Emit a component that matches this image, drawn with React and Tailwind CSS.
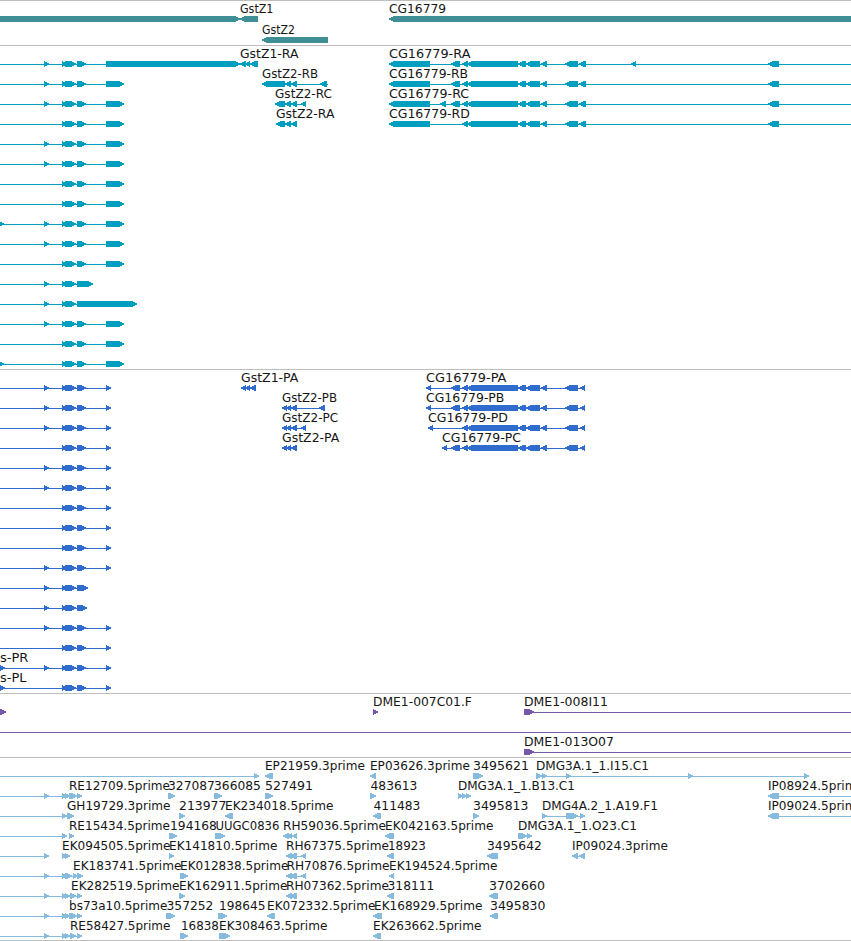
import React from "react";

// Features: ["R" | "L", start, end] is an exon arrow, ["-", start, end] an intron line.
// Labels: [text, ink start, ink end].
const R = (a, b) => ["R", a, b];
const L = (a, b) => ["L", a, b];
const I = (a, b) => ["-", a, b];

function Feature({ kind, a, b, y }) {
  if (kind === "-") return <rect x={a} y={y + 3} width={b - a} height={1} />;
  const h = Math.min(b - a + 1, 6);
  const pts =
    kind === "R"
      ? [[a, y], [b + 1 - h, y], [b + 1, y + 3], [b + 1 - h, y + 6], [a, y + 6]]
      : [[b, y], [a - 1 + h, y], [a - 1, y + 3], [a - 1 + h, y + 6], [b, y + 6]];
  return <polygon points={pts.map((p) => p.join(",")).join(" ")} />;
}

function Track({ className, height, top, rows }) {
  return (
    <section className="border-t border-[#bebebe]">
      <svg width="851" height={height} viewBox={`0 ${top} 851 ${height}`} className={`block ${className}`}>
        <g shapeRendering="crispEdges">
          {rows.map((r) => r.f.map(([kind, a, b], i) => <Feature key={`${r.y}-${i}`} kind={kind} a={a} b={b} y={r.y} />))}
        </g>
        <g className="fill-[#161616] font-['DejaVu_Sans',sans-serif] text-[12px]">
          {rows.map((r) =>
            (r.t || []).map(([text, a, b]) => (
              <text key={text} x={a - 0.5} y={r.y - 3} textLength={b - a + 0.9} lengthAdjust="spacingAndGlyphs">
                {text}
              </text>
            ))
          )}
        </g>
      </svg>
    </section>
  );
}

const genes = [
  {
    y: 16,
    f: [R(-10, 240), L(240, 258), L(389, 870)],
    t: [["GstZ1", 240.5, 273], ["CG16779", 389.5, 445.7]],
  },
  { y: 37, f: [L(262, 328)], t: [["GstZ2", 262.5, 294.5]] },
];

const cgExons = [L(462, 468), L(467, 518), L(518, 526), L(526, 540), L(541, 547), L(565, 578)];
const cgRna = [L(389, 430), I(430, 851), ...cgExons, L(579, 586), L(768, 779)];

const rnaRight = [
  {
    f: [I(240, 258), L(240, 246), L(245, 250), L(250, 258), ...cgRna, L(451, 460), L(631, 636)],
    t: [["GstZ1-RA", 240.5, 298], ["CG16779-RA", 389.5, 470]],
  },
  {
    f: [L(262, 285), L(285, 291), L(291, 297), I(297, 328), L(320, 327), ...cgRna, L(451, 460)],
    t: [["GstZ2-RB", 262.5, 317.7], ["CG16779-RB", 389.5, 467.7]],
  },
  {
    f: [L(275, 285), L(285, 291), L(291, 297), I(297, 306), L(301, 306), ...cgRna, L(440, 446), L(451, 460)],
    t: [["GstZ2-RC", 275.5, 331.5], ["CG16779-RC", 389.5, 468.7]],
  },
  {
    f: [L(276, 285), L(285, 291), L(291, 297), ...cgRna],
    t: [["GstZ2-RA", 276.5, 334], ["CG16779-RD", 389.5, 469.5]],
  },
];

const rna = Array.from({ length: 16 }, (_, i) => {
  const right = rnaRight[i] || { f: [], t: [] };
  const f = [R(62, 67), R(65, 76)];
  if (![3, 6, 7, 10, 14, 15].includes(i)) f.push(R(44, 49));
  if (i === 8 || i === 15) f.push(R(-2, 4));
  if (i === 11) f.push(I(0, 77), R(77, 93));
  else if (i === 12) f.push(I(0, 77), R(77, 137));
  else f.push(I(0, 106), R(77, 86), R(106, i === 0 ? 240 : 124));
  return { y: 61 + 20 * i, f: [...f, ...right.f], t: right.t };
});

const cgCds = [...cgExons, L(580, 585)];
const gst2 = [L(282, 287), L(286, 291), L(291, 297)];

const cdsRight = {
  0: {
    f: [L(241, 246), L(245, 250), L(250, 256), L(426, 431), I(426, 585), L(451, 460), ...cgCds],
    t: [["GstZ1-PA", 241.5, 298], ["CG16779-PA", 426.5, 506]],
  },
  1: {
    f: [...gst2, I(297, 325), L(319, 325), L(426, 431), I(426, 585), L(451, 460), ...cgCds],
    t: [["GstZ2-PB", 282.5, 336.7], ["CG16779-PB", 426.5, 504]],
  },
  2: {
    f: [...gst2, I(297, 306), L(301, 306), L(428, 433), I(428, 585), ...cgCds],
    t: [["GstZ2-PC", 282.5, 337.7], ["CG16779-PD", 428.5, 507.5]],
  },
  3: {
    f: [...gst2, L(442, 447), I(442, 585), L(451, 460), ...cgCds],
    t: [["GstZ2-PA", 282.5, 339], ["CG16779-PC", 442.5, 520.5]],
  },
  14: { f: [R(0, 5)], t: [["s-PR", 0.5, 28]] },
  15: { f: [R(0, 5)], t: [["s-PL", 0.5, 26]] },
};

const cds = Array.from({ length: 16 }, (_, i) => {
  const right = cdsRight[i] || { f: [], t: [] };
  const f = [R(62, 67), R(65, 76)];
  if (![3, 6, 7, 8, 13, 15].includes(i)) f.push(R(44, 49));
  if (i === 10) f.push(I(0, 77), R(77, 88));
  else if (i === 11) f.push(I(0, 77), R(77, 87));
  else f.push(I(0, 106), R(77, 86), R(106, 111));
  return { y: 385 + 20 * i, f: [...f, ...right.f], t: right.t };
});

const bacs = [
  {
    y: 709,
    f: [R(-6, 6), R(373, 378), R(524, 534), I(534, 851)],
    t: [["DME1-007C01.F", 373.5, 471.5], ["DME1-008I11", 524.5, 607.5]],
  },
  { y: 729, f: [I(0, 851)] },
  { y: 749, f: [R(524, 534), I(534, 851)], t: [["DME1-013O07", 524.5, 613.5]] },
];

const ests = [
  {
    y: 773,
    f: [I(0, 256), R(254, 259), L(265, 273), L(370, 376), R(473, 483), R(536, 542), R(542, 547), I(536, 806), R(566, 571), R(688, 693), R(804, 809)],
    t: [["EP21959.3prime", 265.5, 364.5], ["EP03626.3prime", 370.5, 469.5], ["3495621", 473.5, 528.5], ["DMG3A.1_1.I15.C1", 536.5, 648.5]],
  },
  {
    y: 793,
    f: [I(0, 80), R(44, 49), R(62, 67), R(65, 70), R(69, 77), R(77, 82), R(168, 175), R(214, 222), R(265, 273), R(370, 376), R(458, 463), R(462, 467), R(466, 471), L(768, 779), I(779, 851)],
    t: [["RE12709.5prime", 69.5, 169.5], ["327087", 168.5, 214.5], ["366085", 214.5, 260.5], ["527491", 265.5, 312.5], ["483613", 371, 417], ["DMG3A.1_1.B13.C1", 458.5, 574.5], ["IP08924.5prime", 768.5, 863.5]],
  },
  {
    y: 813,
    f: [I(0, 68), R(62, 67), R(67, 74), R(179, 185), L(225, 233), L(373, 381), R(473, 479), R(542, 547), I(542, 583), R(566, 578), R(580, 585), L(768, 779), I(779, 851)],
    t: [["GH19729.3prime", 67.5, 170], ["213977", 179.5, 226], ["EK234018.5prime", 225.5, 333], ["411483", 374, 420], ["3495813", 473.5, 528], ["DMG4A.2_1.A19.F1", 542.5, 657.5], ["IP09024.5prime", 768.5, 863.5]],
  },
  {
    y: 833,
    f: [I(0, 64), R(62, 67), R(69, 74), R(169, 177), R(215, 225), L(283, 289), L(287, 292), L(292, 297), L(385, 394), R(518, 527), R(527, 532)],
    t: [["RE15434.5prime", 69.5, 169.5], ["194168", 170.5, 216.5], ["UUGC0836", 216, 279], ["RH59036.5prime", 283.5, 385.5], ["EK042163.5prime", 385.5, 493], ["DMG3A.1_1.O23.C1", 518.5, 636.5]],
  },
  {
    y: 853,
    f: [I(0, 46), R(44, 49), R(62, 67), R(65, 70), R(169, 174), L(286, 292), L(290, 297), I(295, 306), L(301, 306), L(387, 394), L(487, 498), L(572, 578), L(579, 585), I(575, 582)],
    t: [["EK094505.5prime", 62.5, 170], ["EK141810.5prime", 169.5, 277], ["RH67375.5prime", 286.5, 388.5], ["18923", 388.5, 425.5], ["3495642", 487.5, 541.5], ["IP09024.3prime", 572.5, 667.5]],
  },
  {
    y: 873,
    f: [I(0, 79), R(44, 49), R(62, 67), R(65, 72), R(73, 78), R(77, 83), R(180, 188), L(286, 292), L(290, 297), I(295, 306), L(301, 306), L(389, 394)],
    t: [["EK183741.5prime", 73.5, 181], ["EK012838.5prime", 180.5, 288], ["RH70876.5prime", 287, 389], ["EK194524.5prime", 389.5, 497]],
  },
  {
    y: 893,
    f: [I(0, 80), R(44, 49), R(62, 67), R(65, 70), R(70, 76), R(77, 82), R(179, 185), L(286, 292), L(290, 297), L(387, 394), L(489, 498)],
    t: [["EK282519.5prime", 71.5, 179], ["EK162911.5prime", 179.5, 287], ["RH07362.5prime", 286.5, 388.5], ["318111", 388, 434], ["3702660", 489.5, 544.5]],
  },
  {
    y: 913,
    f: [I(0, 80), R(44, 49), R(62, 67), R(65, 70), R(69, 77), R(77, 82), R(166, 175), R(218, 227), L(267, 275), L(373, 382), L(490, 498)],
    t: [["bs73a10.5prime", 69.5, 167], ["357252", 167, 213], ["198645", 219.5, 265], ["EK072332.5prime", 267.5, 375], ["EK168929.5prime", 374.5, 482], ["3495830", 490.5, 545]],
  },
  {
    y: 933,
    f: [I(0, 80), R(44, 49), R(62, 67), R(65, 70), R(70, 76), R(77, 82), R(180, 188), R(219, 230), L(373, 381)],
    t: [["RE58427.5prime", 70.5, 170], ["16838", 181.5, 218.5], ["EK308463.5prime", 219.5, 327], ["EK263662.5prime", 373.5, 481]],
  },
];

export default function App() {
  return (
    <main className="flex w-[851px] flex-col overflow-hidden border-b border-[#bebebe] bg-white">
      <Track className="fill-[#408e96]" height={44} top={1} rows={genes} />
      <Track className="fill-[#009ebf]" height={323} top={46} rows={rna} />
      <Track className="fill-[#306ccd]" height={323} top={370} rows={cds} />
      <Track className="fill-[#7658a8]" height={63} top={694} rows={bacs} />
      <Track className="fill-[#86bbdd]" height={182} top={758} rows={ests} />
    </main>
  );
}
